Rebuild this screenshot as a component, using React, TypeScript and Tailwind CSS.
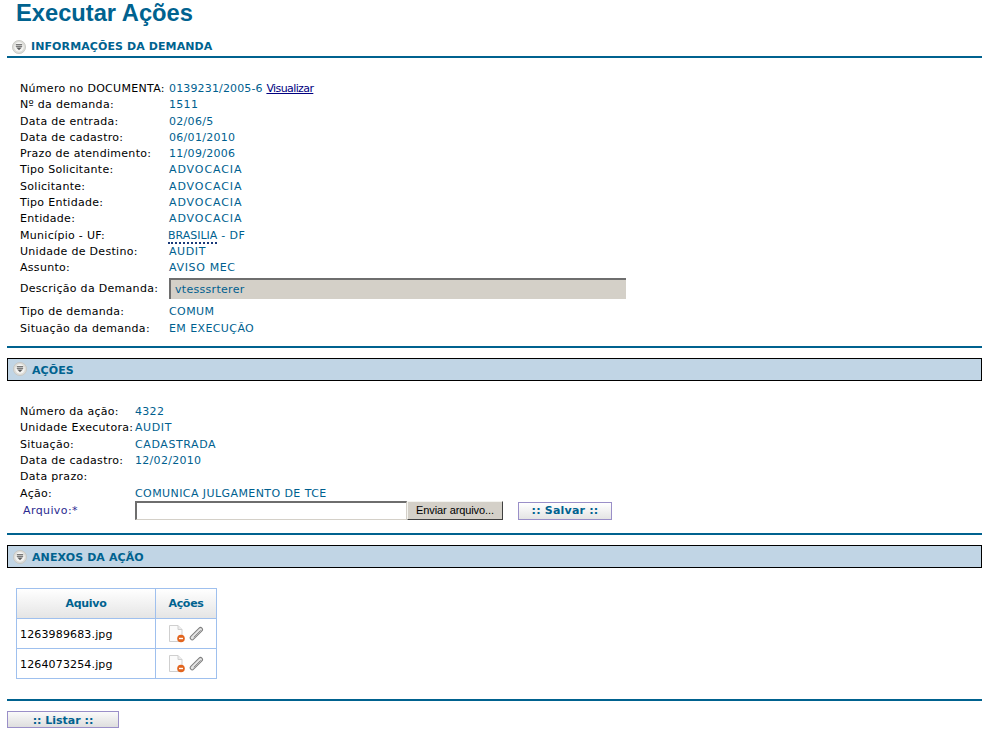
import React from 'react';

const demanda: [string, React.ReactNode, string?][] = [
  ['Número no DOCUMENTA:', <>0139231/2005-6 <a href="#" className="tracking-[-0.6px] text-[#000080] underline">Visualizar</a></>, 'tracking-[0.15px]'],
  ['Nº da demanda:', '1511', 'tracking-[0.3px]'],
  ['Data de entrada:', '02/06/5', 'tracking-[0.3px]'],
  ['Data de cadastro:', '06/01/2010', 'tracking-[0.3px]'],
  ['Prazo de atendimento:', '11/09/2006', 'tracking-[0.3px]'],
  ['Tipo Solicitante:', 'ADVOCACIA', 'tracking-[0.9px]'],
  ['Solicitante:', 'ADVOCACIA', 'tracking-[0.9px]'],
  ['Tipo Entidade:', 'ADVOCACIA', 'tracking-[0.9px]'],
  ['Entidade:', 'ADVOCACIA', 'tracking-[0.9px]'],
  ['Município - UF:', <><span className="-ml-px border-b-2 border-dotted border-[#1a3a7a]">BRASILIA</span><span className="tracking-[0.4px]"> - DF</span></>],
  ['Unidade de Destino:', 'AUDIT', 'tracking-[0.6px]'],
  ['Assunto:', 'AVISO MEC', 'tracking-[0.65px]'],
];

const demanda2: [string, string, string][] = [
  ['Tipo de demanda:', 'COMUM', 'tracking-[0.4px]'],
  ['Situação da demanda:', 'EM EXECUÇÃO', 'tracking-[0.4px]'],
];

const acoes: [string, string, string][] = [
  ['Número da ação:', '4322', 'tracking-[0.3px]'],
  ['Unidade Executora:', 'AUDIT', 'tracking-[0.6px]'],
  ['Situação:', 'CADASTRADA', 'tracking-[0.6px]'],
  ['Data de cadastro:', '12/02/2010', 'tracking-[0.3px]'],
  ['Data prazo:', '', ''],
  ['Ação:', 'COMUNICA JULGAMENTO DE TCE', 'tracking-[0.42px]'],
];

const CollapseIcon = () => (
  <svg width="14" height="14" viewBox="0 0 14 14" className="shrink-0">
    <circle cx="7" cy="7" r="6.6" fill="#dcdcd8" stroke="#c4c4c0" strokeWidth="0.8" />
    <circle cx="7" cy="7" r="4.7" fill="#f4f4f2" />
    <path d="M3.800 4.700h6.400M3.800 6.300h6.400" stroke="#5c5c5c" strokeWidth="1" />
    <path d="M4.200 7.500h5.600L7 10.300z" fill="#5c5c5c" />
  </svg>
);

const DeleteFileIcon = () => (
  <svg width="16" height="18" viewBox="0 0 16 18" className="shrink-0">
    <path d="M.5.500h8.500l4 4v12h-12.500z" fill="#fbfbfb" stroke="#cfcfcf" />
    <path d="M9 .500v4h4" fill="#ececec" stroke="#cfcfcf" />
    <circle cx="12" cy="13.500" r="3.800" fill="#e2651f" />
    <path d="M10 13.500h4" stroke="#fff" strokeWidth="1.400" />
  </svg>
);

const ClipIcon = () => (
  <svg width="15" height="15" viewBox="0 0 15 15" className="shrink-0">
    <path d="M3.200 11.800 11.500 3.500" fill="none" stroke="#7f7f7f" strokeWidth="5" strokeLinecap="round" />
    <path d="M3.200 11.800 11.500 3.500" fill="none" stroke="#e4e4e4" strokeWidth="3" strokeLinecap="round" />
    <path d="M4.800 11.200 11.700 4.300" fill="none" stroke="#8f8f8f" strokeWidth="1" />
  </svg>
);

const Field = ({ label, value, labelWidth, valueClass }: { label: string; value: React.ReactNode; labelWidth: string; valueClass?: string }) => (
  <div className="flex h-[16.3px] items-center whitespace-nowrap">
    <span className={`${labelWidth} tracking-[0.3px] text-black`}>{label}</span>
    <span className={`text-[#005f8f] ${valueClass ?? ''}`}>{value}</span>
  </div>
);

const Rule = () => <div className="h-[2px] bg-[#00628f]" />;

const SectionBox = ({ title }: { title: string }) => (
  <div className="flex h-[23px] items-center gap-[5px] border border-black bg-[#c1d5e5] pl-[5px]">
    <CollapseIcon />
    <span className="pt-[4px] text-[11px] font-bold tracking-[0.1px] text-[#00628f]">{title}</span>
  </div>
);

export default function App() {
  return (
    <div className="h-[732px] w-[1001px] overflow-hidden bg-white pl-[7px] font-['DejaVu_Sans',Verdana,sans-serif] text-[11px]">
      <div className="w-[975px]">
        <h1 className="h-[26px] pl-[9px] font-['Liberation_Sans',Arial,sans-serif] text-[23.7px] leading-[26px] font-bold text-[#00628f]">
          Executar Ações
        </h1>

        <div className="mt-[12px] flex h-[18px] items-center gap-[5px] pl-[5px]">
          <CollapseIcon />
          <span className="text-[11px] font-bold tracking-[0.1px] text-[#00628f]">INFORMAÇÕES DA DEMANDA</span>
        </div>
        <Rule />

        <div className="pt-[23px] pl-[13px]">
          {demanda.map(([label, value, cls]) => (
            <Field key={label} label={label} value={value} labelWidth="w-[149px]" valueClass={cls} />
          ))}
          <div className="mt-[1px] mb-[6px] flex h-[21px] items-center">
            <span className="w-[149px] pt-[3px] tracking-[0.3px]">Descrição da Demanda:</span>
            <div className="flex h-[21px] w-[457px] items-center border-t-2 border-l-2 border-[#6e6e6e] bg-[#d4d0c8] pt-[2px] pl-[4px] tracking-[0.3px] text-[#005f8f]">
              vtesssrterer
            </div>
          </div>
          {demanda2.map(([label, value, cls]) => (
            <Field key={label} label={label} value={value} labelWidth="w-[149px]" valueClass={cls} />
          ))}
        </div>

        <div className="mt-[8.6px]">
          <Rule />
        </div>
        <div className="mt-[10px]">
          <SectionBox title="AÇÕES" />
        </div>

        <div className="pt-[23.5px] pl-[13px]">
          {acoes.map(([label, value, cls]) => (
            <Field key={label} label={label} value={value} labelWidth="w-[115px]" valueClass={cls} />
          ))}
          <div className="-mt-[1px] flex h-[19px] items-start">
            <span className="w-[115px] pt-[2px] pl-[3px] tracking-[0.4px] text-[#2a2a90]">Arquivo:*</span>
            <div className="h-[19px] w-[272px] border-t-2 border-r border-b border-l-2 border-t-[#6e6e6e] border-r-[#d4d0c8] border-b-[#d4d0c8] border-l-[#6e6e6e] bg-white" />
            <button className="h-[19px] w-[96px] border border-t-[#f4f4f0] border-r-[#404040] border-b-[#404040] border-l-[#f4f4f0] bg-[#d4d0c8] text-center font-['Liberation_Sans',Arial,sans-serif] text-[11px] tracking-[-0.1px] text-black">
              Enviar arquivo...
            </button>
            <button className="mt-[1px] ml-[15px] h-[18px] w-[94px] border border-[#9a8fc8] bg-gradient-to-b from-[#ffffff] to-[#e4e4e4] text-[11px] font-bold tracking-[0.2px] text-[#00628f]">
              :: Salvar ::
            </button>
          </div>
        </div>

        <div className="mt-[13px]">
          <Rule />
        </div>
        <div className="mt-[10px]">
          <SectionBox title="ANEXOS DA AÇÃO" />
        </div>

        <table className="mt-[20px] ml-[9px] w-[201px] border-collapse border border-[#9fc0ee] text-[11px]">
          <thead>
            <tr className="h-[30px] bg-gradient-to-b from-[#ffffff] to-[#e4e4e4] text-[#00628f]">
              <th className="w-[139px] border border-[#9fc0ee] pt-[1px] font-bold tracking-[-0.3px]">Aquivo</th>
              <th className="border border-[#9fc0ee] pt-[1px] font-bold tracking-[-0.3px]">Ações</th>
            </tr>
          </thead>
          <tbody>
            {['1263989683.jpg', '1264073254.jpg'].map((file) => (
              <tr key={file} className="h-[30px]">
                <td className="border border-[#9fc0ee] pt-[4px] pl-[3px] tracking-[0.15px] text-black">{file}</td>
                <td className="border border-[#9fc0ee]">
                  <div className="flex items-center justify-center gap-[4px]">
                    <DeleteFileIcon />
                    <ClipIcon />
                  </div>
                </td>
              </tr>
            ))}
          </tbody>
        </table>

        <div className="mt-[20px]">
          <Rule />
        </div>
        <button className="mt-[10px] block h-[17px] w-[112px] border border-[#9a8fc8] bg-gradient-to-b from-[#fafafa] to-[#dedede] pt-[1px] text-[11px] font-bold text-[#00628f]">
          :: Listar ::
        </button>
      </div>
    </div>
  );
}
